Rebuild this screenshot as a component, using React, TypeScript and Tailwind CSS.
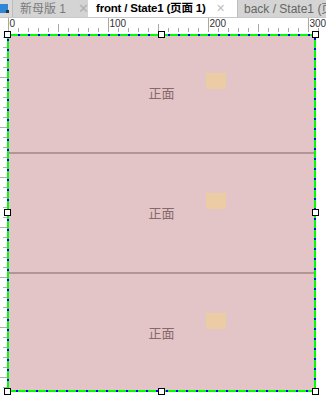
import React from "react";

const FONT = { fontFamily: '"Liberation Sans", "Noto Sans CJK SC", sans-serif' };

const SECTIONS = [0, 1, 2];

function TopRuler() {
  const ticks = [];
  for (let i = 0; i <= 310; i += 10) {
    const major = i % 100 === 0;
    const mid = i % 50 === 0;
    ticks.push(
      <line
        key={i}
        x1={i + 8.5}
        x2={i + 8.5}
        y1={major ? 0 : mid ? 6 : 10}
        y2={14}
        stroke="#a8a8a8"
        strokeWidth={1}
      />
    );
  }
  return (
    <svg width={326} height={15} className="block">
      {ticks}
      {[0, 100, 200, 300].map((n) => (
        <text key={n} x={n + 9.5} y={9} fontSize={10} fill="#333" style={FONT}>
          {n}
        </text>
      ))}
    </svg>
  );
}

function LeftRuler() {
  const ticks = [];
  for (let i = 4; i < 360; i += 10) {
    const mid = (i + 6) % 50 === 0;
    ticks.push(
      <line key={i} x1={mid ? 0 : 3} x2={7} y1={i + 0.5} y2={i + 0.5} stroke="#b0b0b0" strokeWidth={1} />
    );
  }
  return (
    <svg width={7} height={360} className="block shrink-0">
      {ticks}
    </svg>
  );
}

function Handle({ className }: { className: string }) {
  return <div className={`absolute w-[7px] h-[7px] bg-white border border-black ${className}`} />;
}

export default function App() {
  return (
    <div className="w-[326px] h-[399px] bg-white overflow-hidden" style={FONT}>
      {/* tabs */}
      <div className="flex h-[18px] bg-[#d9d9d9] border-b border-[#c8c8c8] text-[12px] leading-none whitespace-nowrap">
        <div className="w-[12px] shrink-0 flex items-center">
          <div className="w-[8px] h-[9px] bg-[#2f86d8] relative">
            <div className="absolute right-[-1px] bottom-0 w-[3px] h-[3px] bg-[#333]" />
          </div>
        </div>
        <div className="w-[76px] shrink-0 flex items-center border-l border-[#bdbdbd] bg-[#d4d4d4] pl-[7px] text-[#7a7a7a]">
          <span>新母版 1</span>
          <span className="ml-[12px] text-[#b0b0b0] text-[13px]">✕</span>
        </div>
        <div className="w-[149px] shrink-0 flex items-center bg-white pl-[8px] text-black font-bold">
          <span className="text-[11.5px] tracking-[-0.2px]">front / State1 (页面 1)</span>
          <span className="ml-[10px] text-[#bdbdbd] text-[11px] font-normal">✕</span>
        </div>
        <div className="flex-1 min-w-0 flex items-center border-l border-[#bdbdbd] bg-[#d4d4d4] pl-[6px] text-[#666] overflow-hidden">
          <span>back / State1 (页面 1)</span>
        </div>
      </div>
      {/* top ruler */}
      <TopRuler />
      {/* body */}
      <div className="flex">
        <LeftRuler />
        <div className="relative mt-[1px] w-[309px] h-[358px]">
          <div className="flex flex-col h-full bg-[#e4c5c7]">
            {SECTIONS.map((s) => (
              <div
                key={s}
                className={`relative flex-1 flex items-center justify-center ${s < 2 ? "border-b-2 border-[#b39596]" : ""}`}
              >
                <span className="text-[13px] text-[#86696b] pt-[1px]">正面</span>
                <div className="absolute left-[199px] top-[39px] w-[20px] h-[16px] bg-[#ebcca5]" />
              </div>
            ))}
          </div>
          {/* selection outline */}
          <svg className="absolute inset-0 pointer-events-none" width={309} height={358}>
            <rect x={1} y={1} width={307} height={356} fill="none" stroke="#00ff00" strokeWidth={2} />
            <rect
              x={1}
              y={1}
              width={307}
              height={356}
              fill="none"
              stroke="#0000ff"
              strokeWidth={2}
              strokeDasharray="2 8"
            />
          </svg>
          <Handle className="left-[-3px] top-[-3px]" />
          <Handle className="left-[151px] top-[-3px]" />
          <Handle className="right-[-3px] top-[-3px]" />
          <Handle className="left-[-3px] top-[175px]" />
          <Handle className="right-[-3px] top-[175px]" />
          <Handle className="left-[-3px] bottom-[-3px]" />
          <Handle className="left-[151px] bottom-[-3px]" />
          <Handle className="right-[-3px] bottom-[-3px]" />
        </div>
      </div>
    </div>
  );
}
